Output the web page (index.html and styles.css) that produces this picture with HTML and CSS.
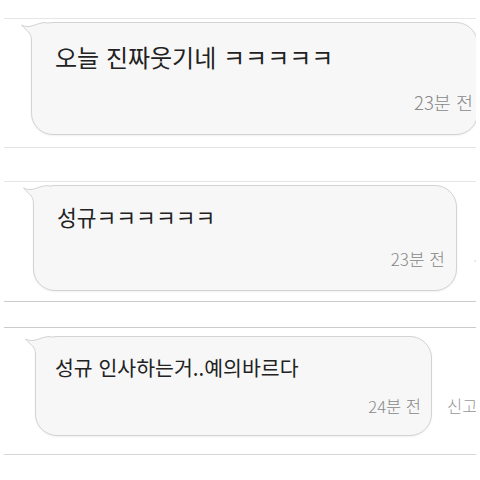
FILE: index.html
```html
<!DOCTYPE html>
<html lang="ko">
<head>
    <meta charset="UTF-8">
    <meta name="viewport" content="width=device-width, initial-scale=1.0">
    <title>댓글</title>
    <link rel="stylesheet" href="styles.css">
</head>
<body>
    <div class="shot shot-one">
        <div class="row">
            <div class="bubble">
                <svg class="tail" width="26" height="22" viewBox="0 0 26 22">
                    <path class="tail-fill" d="M26 0.5 C18 0.5 13 4 8 4.5 C5 4.8 2.5 4 0.5 3 C3 6 7 9 9 12 C10.3 14 10.5 17 10.5 21 L26 21 Z"/>
                    <path class="tail-line" d="M26 0.5 C18 0.5 13 4 8 4.5 C5 4.8 2.5 4 0.5 3 C3 6 7 9 9 12 C10.3 14 10.5 17 10.5 21"/>
                </svg>
                <div class="text">오늘 진짜웃기네 ㅋㅋㅋㅋㅋ</div>
                <div class="time">23분 전</div>
            </div>
        </div>
    </div>

    <div class="shot shot-two">
        <div class="row">
            <div class="bubble">
                <svg class="tail" width="26" height="22" viewBox="0 0 26 22">
                    <path class="tail-fill" d="M26 0.5 C18 0.5 13 4 8 4.5 C5 4.8 2.5 4 0.5 3 C3 6 7 9 9 12 C10.3 14 10.5 17 10.5 21 L26 21 Z"/>
                    <path class="tail-line" d="M26 0.5 C18 0.5 13 4 8 4.5 C5 4.8 2.5 4 0.5 3 C3 6 7 9 9 12 C10.3 14 10.5 17 10.5 21"/>
                </svg>
                <div class="text">성규ㅋㅋㅋㅋㅋㅋ</div>
                <div class="time">23분 전</div>
            </div>
            <div class="report">신고</div>
        </div>
    </div>

    <div class="shot shot-three">
        <div class="row">
            <div class="bubble">
                <svg class="tail" width="26" height="22" viewBox="0 0 26 22">
                    <path class="tail-fill" d="M26 0.5 C18 0.5 13 4 8 4.5 C5 4.8 2.5 4 0.5 3 C3 6 7 9 9 12 C10.3 14 10.5 17 10.5 21 L26 21 Z"/>
                    <path class="tail-line" d="M26 0.5 C18 0.5 13 4 8 4.5 C5 4.8 2.5 4 0.5 3 C3 6 7 9 9 12 C10.3 14 10.5 17 10.5 21"/>
                </svg>
                <div class="text">성규 인사하는거..예의바르다</div>
                <div class="time">24분 전</div>
            </div>
            <div class="report">신고</div>
        </div>
    </div>
</body>
</html>
```

FILE: styles.css
```css
body {
    margin: 0;
    padding-top: 18px;
    background: #ffffff;
    font-family: "Noto Sans CJK KR", "Noto Sans", sans-serif;
    color: #222222;
}

.shot {
    margin: 0 4px;
    border-top: 1px solid #e6e6e6;
    border-bottom: 1px solid #e3e3e3;
    overflow: hidden;
}

.row {
    display: flex;
    align-items: flex-end;
}

.bubble {
    position: relative;
    flex: none;
    display: flex;
    flex-direction: column;
    box-sizing: border-box;
    background: #f7f7f7;
    border: 1px solid #d3d3d3;
    border-radius: 22px;
    box-shadow: 0 1px 2px rgba(0, 0, 0, 0.06);
}

.tail {
    position: absolute;
    left: -11px;
    top: -1px;
    overflow: visible;
}

.tail-fill {
    fill: #f7f7f7;
}

.tail-line {
    fill: none;
    stroke: #d3d3d3;
    stroke-width: 1;
}

.text {
    font-size: 21.5px;
    line-height: 30px;
    white-space: nowrap;
}

.time {
    align-self: flex-end;
    font-size: 17px;
    font-weight: 300;
    line-height: 24px;
    color: #888888;
    white-space: nowrap;
}

.report {
    flex: none;
    font-size: 17px;
    font-weight: 300;
    line-height: 24px;
    color: #999999;
    white-space: nowrap;
}

/* first capture */
.shot-one {
    padding: 3px 0 12px 27px;
}

.shot-one .bubble {
    width: 447px;
    margin-right: -10px;
    padding: 18px 4px 20px 23px;
}

.shot-one .text {
    font-size: 24px;
    line-height: 32px;
}

.shot-one .time {
    margin-top: 17px;
    font-size: 18.5px;
}

/* second capture */
.shot-two {
    margin-top: 33px;
    padding: 3px 0 10px 29px;
    border-bottom-color: #cccccc;
}

.shot-two .bubble {
    width: 424px;
    padding: 16px 11px 19px 23px;
}

.shot-two .time {
    margin-top: 15px;
}

.shot-two .report {
    margin: 0 0 19px 16px;
    color: #d8d8d8;
}

/* third capture */
.shot-three {
    margin-top: 25px;
    padding: 8px 0 18px 31px;
    border-top-color: #cccccc;
    border-bottom-color: #d6d6d6;
}

.shot-three .bubble {
    width: 397px;
    padding: 15px 10px 17px 19px;
}

.shot-three .text {
    font-size: 20.5px;
}

.shot-three .time {
    margin-top: 12px;
    font-size: 16.5px;
}

.shot-three .report {
    margin: 0 0 18px 15px;
    font-size: 16.5px;
}
```
